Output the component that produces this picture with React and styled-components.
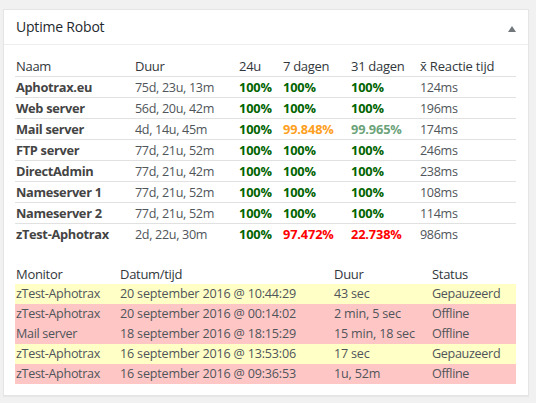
import React from "react";
import styled, { createGlobalStyle } from "styled-components";

const Global = createGlobalStyle`
  html, body { margin: 0; background: #f1f1f1; }
  body { width: 536px; height: 403px; overflow: hidden; font-family: "Open Sans", "Noto Sans", sans-serif; color: #444; }
`;
const Page = styled.div`
  padding: 9px 7px 7px 3px;
`;
const Card = styled.section`
  width: 526px;
  height: 387px;
  box-sizing: border-box;
  background: #fff;
  border: 1px solid #e5e5e5;
  box-shadow: 0 1px 1px rgba(0,0,0,.04);
`;
const Header = styled.header`
  height: 34px;
  display: flex;
  align-items: center;
  justify-content: space-between;
  padding: 0 12px;
  border-bottom: 1px solid #eee;
`;
const Title = styled.h2`
  margin: 0 0 1px;
  font-size: 14px;
  font-weight: 400;
  letter-spacing: -0.2px;
  color: #23282d;
`;
const Arrow = styled.span`
  width: 0;
  height: 0;
  border-left: 4px solid transparent;
  border-right: 4px solid transparent;
  border-bottom: 6px solid #72777c;
  margin-top: 3px;
`;
const Body = styled.div`
  padding: 10px 12px 0 11px;
`;
const Table = styled.table`
  width: 501px;
  border-collapse: collapse;
  table-layout: fixed;
  font-size: 12.6px;
  letter-spacing: -0.33px;
  margin-bottom: ${p => p.$gap || 0}px;
`;
const HeadCell = styled.th`
  font-weight: 400;
  font-size: 13px;
  letter-spacing: ${p => p.$ls ?? -0.3}px;
  text-align: left;
  color: #32373c;
  padding: 0 0 0 1px;
  height: ${p => p.$h || 21}px;
  white-space: nowrap;
`;
const UptimeRow = styled.tr`
  height: 21px;
  border-top: 1px solid #e1e1e1;
`;
const Cell = styled.td`
  padding: 0 0 0 1px;
  white-space: nowrap;
  color: #50555a;
`;
const LogCell = styled(Cell)`
  letter-spacing: ${p => p.$ls}px;
`;
const NameCell = styled(Cell)`
  font-weight: 700;
  font-size: 12.8px;
  letter-spacing: -0.3px;
  color: #444;
`;
const Pct = styled(Cell)`
  font-weight: 700;
  font-size: 12.8px;
  letter-spacing: -0.15px;
  color: ${p => p.$c};
`;
const LogRow = styled.tr`
  height: 20px;
  background: ${p => (p.$s === "Offline" ? "#ffc6c6" : "#ffffc6")};
`;

const G = "#006400", O = "#ffa01e", L = "#6ca37a", R = "#ff0000";
const uptime = [
  ["Aphotrax.eu", "75d, 23u, 13m", ["100%", G], ["100%", G], ["100%", G], "124ms"],
  ["Web server", "56d, 20u, 42m", ["100%", G], ["100%", G], ["100%", G], "196ms"],
  ["Mail server", "4d, 14u, 45m", ["100%", G], ["99.848%", O], ["99.965%", L], "174ms"],
  ["FTP server", "77d, 21u, 52m", ["100%", G], ["100%", G], ["100%", G], "246ms"],
  ["DirectAdmin", "77d, 21u, 42m", ["100%", G], ["100%", G], ["100%", G], "238ms"],
  ["Nameserver 1", "77d, 21u, 52m", ["100%", G], ["100%", G], ["100%", G], "108ms"],
  ["Nameserver 2", "77d, 21u, 52m", ["100%", G], ["100%", G], ["100%", G], "114ms"],
  ["zTest-Aphotrax", "2d, 22u, 30m", ["100%", G], ["97.472%", R], ["22.738%", R], "986ms"],
];
const log = [
  ["zTest-Aphotrax", "20 september 2016 @ 10:44:29", "43 sec", "Gepauzeerd"],
  ["zTest-Aphotrax", "20 september 2016 @ 00:14:02", "2 min, 5 sec", "Offline"],
  ["Mail server", "18 september 2016 @ 18:15:29", "15 min, 18 sec", "Offline"],
  ["zTest-Aphotrax", "16 september 2016 @ 13:53:06", "17 sec", "Gepauzeerd"],
  ["zTest-Aphotrax", "16 september 2016 @ 09:36:53", "1u, 52m", "Offline"],
];
const logSpacing = [-0.33, -0.19, -0.2, -0.33];

export default function App() {
  return (
    <Page>
      <Global />
      <Card>
        <Header>
          <Title>Uptime Robot</Title>
          <Arrow />
        </Header>
        <Body>
          <Table $gap={19}>
            <colgroup>
              <col width="119" /><col width="104" /><col width="44" /><col width="68" /><col width="69" /><col width="97" />
            </colgroup>
            <thead>
              <tr>
                <HeadCell>Naam</HeadCell><HeadCell>Duur</HeadCell><HeadCell>24u</HeadCell>
                <HeadCell>7 dagen</HeadCell><HeadCell>31 dagen</HeadCell><HeadCell $ls={-0.17}>x̄ Reactie tijd</HeadCell>
              </tr>
            </thead>
            <tbody>
              {uptime.map(r => (
                <UptimeRow key={r[0]}>
                  <NameCell>{r[0]}</NameCell>
                  <Cell>{r[1]}</Cell>
                  <Pct $c={r[2][1]}>{r[2][0]}</Pct>
                  <Pct $c={r[3][1]}>{r[3][0]}</Pct>
                  <Pct $c={r[4][1]}>{r[4][0]}</Pct>
                  <Cell>{r[5]}</Cell>
                </UptimeRow>
              ))}
            </tbody>
          </Table>
          <Table>
            <colgroup>
              <col width="104" /><col width="214" /><col width="98" /><col width="85" />
            </colgroup>
            <thead>
              <tr>
                <HeadCell $h={20}>Monitor</HeadCell><HeadCell $h={20}>Datum/tijd</HeadCell><HeadCell $h={20}>Duur</HeadCell><HeadCell $h={20}>Status</HeadCell>
              </tr>
            </thead>
            <tbody>
              {log.map((r, i) => (
                <LogRow key={i} $s={r[3]}>
                  {r.map((t, j) => <LogCell key={j} $ls={logSpacing[j]}>{t}</LogCell>)}
                </LogRow>
              ))}
            </tbody>
          </Table>
        </Body>
      </Card>
    </Page>
  );
}
